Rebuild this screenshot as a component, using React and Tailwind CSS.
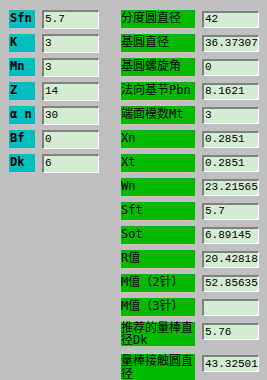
import React from 'react';

const leftRows = [
  ['Sfn', '5.7'],
  ['K', '3'],
  ['Mn', '3'],
  ['Z', '14'],
  ['α n', '30'],
  ['Bf', '0'],
  ['Dk', '6'],
];

const rightRows = [
  ['分度圆直径', '42'],
  ['基圆直径', '36.37307'],
  ['基圆螺旋角', '0'],
  ['法向基节Pbn', '8.1621'],
  ['端面模数Mt', '3'],
  ['Xn', '0.2851'],
  ['Xt', '0.2851'],
  ['Wn', '23.21565'],
  ['Sft', '5.7'],
  ['Sot', '6.89145'],
  ['R值', '20.42818'],
  ['M值（2针）', '52.85635'],
  ['M值（3针）', ''],
];

const labelFont = { fontFamily: '"DejaVu Sans Mono", "Noto Sans CJK SC", monospace' };
const valueFont = { fontFamily: '"Liberation Mono", "DejaVu Sans Mono", monospace' };

const Field = ({ value, tall }) => (
  <div
    className={`w-[57px] ${tall ? 'h-[19px]' : 'h-[17px]'} bg-[#d3ebd0] border-t-2 border-l-2 border-b border-r border-t-[#808080] border-l-[#808080] border-b-white border-r-white flex items-center pl-[1px] text-[11px] text-black leading-none`}
    style={valueFont}
  >
    {value}
  </div>
);

export default function App() {
  return (
    <div className="w-[267px] h-[380px] bg-[#c0c0c0] overflow-hidden flex pt-[10px] pl-[9px]">
      {/* left column */}
      <div className="flex flex-col gap-[6px] w-[90px]">
        {leftRows.map(([label, value]) => (
          <div key={label} className="flex items-center h-[18px] gap-[7px]">
            <div
              className="w-[26px] h-[18px] bg-[#00bfbf] text-black text-[12px] leading-[14px] font-bold pl-[1px] pt-[1px] whitespace-nowrap"
              style={labelFont}
            >
              {label}
            </div>
            <Field value={value} tall />
          </div>
        ))}
      </div>

      {/* right column */}
      <div className="flex flex-col gap-[6px] ml-[22px]">
        {rightRows.map(([label, value]) => (
          <div key={label} className="flex items-center h-[18px] gap-[7px]">
            <div
              className="w-[74px] h-[18px] bg-[#00bb00] text-black text-[12px] leading-[14px] pt-[1px] whitespace-nowrap overflow-hidden"
              style={labelFont}
            >
              {label}
            </div>
            <Field value={value} />
          </div>
        ))}
        <div className="flex items-start gap-[7px]">
          <div
            className="w-[74px] h-[24px] bg-[#00bb00] text-black text-[12px] leading-[12px] break-all"
            style={labelFont}
          >
            推荐的量棒直径Dk
          </div>
          <div className="mt-[1px]">
            <Field value="5.76" />
          </div>
        </div>
        <div className="flex items-start gap-[7px] mt-[2px]">
          <div
            className="w-[74px] h-[27px] bg-[#00bb00] text-black text-[12px] leading-[13px] break-all pt-[1px]"
            style={labelFont}
          >
            量棒接触圆直径
          </div>
          <div className="mt-[1px]">
            <Field value="43.32501" />
          </div>
        </div>
      </div>
    </div>
  );
}
